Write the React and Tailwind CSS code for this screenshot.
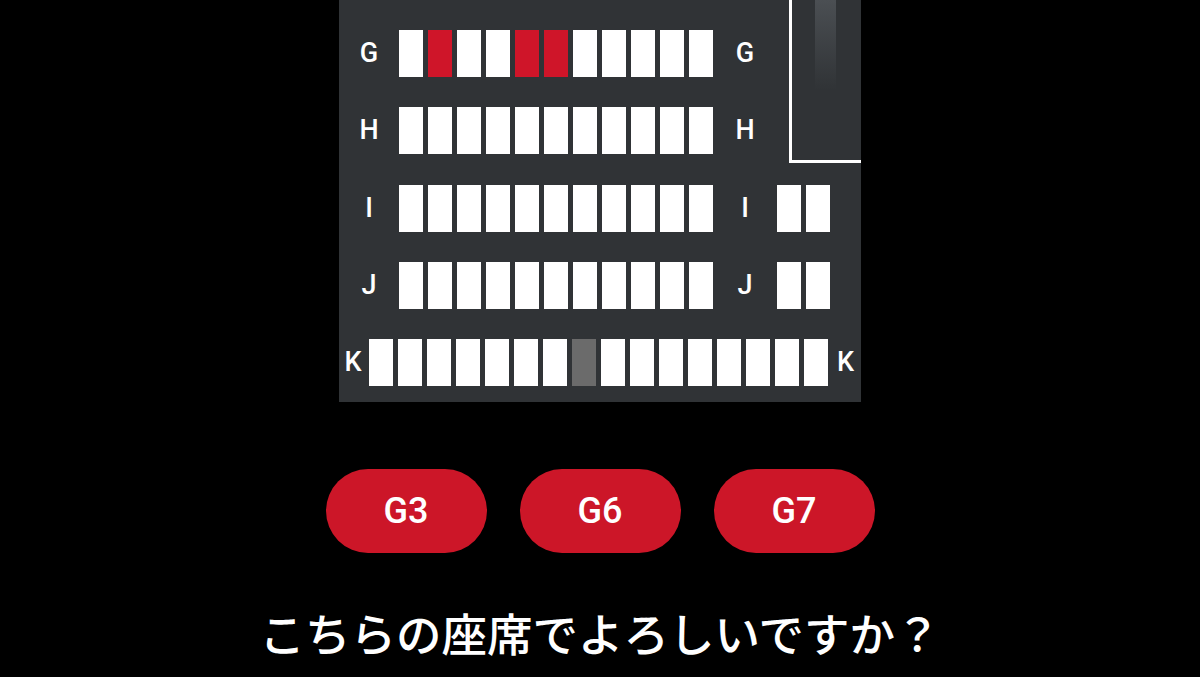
import React from 'react';

const RED = [1, 4, 5];

function Seat({ kind = 'free' }) {
    const color =
        kind === 'picked' ? 'bg-[#cf1529]' : kind === 'taken' ? 'bg-[#6b6b6b]' : 'bg-white';
    return <div className={`w-[24px] h-[47px] ${color}`} />;
}

function Label({ children, className }) {
    return (
        <div className={`text-white text-[27px] font-medium text-center leading-none ${className}`}>
            {children}
        </div>
    );
}

function Row({ letter, picked = [], side = false }) {
    return (
        <div className="flex items-center h-[47px]">
            <Label className="w-[60px]">{letter}</Label>
            <div className="flex gap-[5px]">
                {Array.from({ length: 11 }).map((_, i) => (
                    <Seat key={i} kind={picked.includes(i) ? 'picked' : 'free'} />
                ))}
            </div>
            <Label className="w-[64px]">{letter}</Label>
            {side && (
                <div className="flex gap-[5px]">
                    <Seat />
                    <Seat />
                </div>
            )}
        </div>
    );
}

export default function App() {
    return (
        <div
            className="w-full h-[677px] bg-black flex flex-col items-center overflow-hidden"
            style={{ fontFamily: 'Roboto, "Noto Sans CJK JP", sans-serif' }}
        >
            <div className="relative w-[522px] bg-[#303336] pt-[30px] pb-[16px] flex flex-col gap-[30.3px]">
                {/* screen / exit box at top right */}
                <div className="absolute left-[450px] top-0 w-[72px] h-[163px] border-l-[3px] border-b-[3px] border-white">
                    <div className="ml-[23px] w-[21px] h-[90px] bg-linear-to-b from-[#4b4f53] to-[#303336]" />
                </div>

                <Row letter="G" picked={RED} />
                <Row letter="H" />
                <Row letter="I" side />
                <Row letter="J" side />

                <div className="flex items-center h-[47px]">
                    <Label className="w-[31px] pr-[2px]">K</Label>
                    <div className="flex gap-[5px]">
                        {Array.from({ length: 16 }).map((_, i) => (
                            <Seat key={i} kind={i === 7 ? 'taken' : 'free'} />
                        ))}
                    </div>
                    <Label className="w-[34px] pl-[2px]">K</Label>
                </div>
            </div>

            <div className="flex gap-[33px] mt-[67px]">
                {['G3', 'G6', 'G7'].map((s) => (
                    <div
                        key={s}
                        className="w-[161px] h-[84px] rounded-full bg-[#cc1628] flex items-center justify-center text-white text-[36px] font-medium"
                    >
                        {s}
                    </div>
                ))}
            </div>

            <div
                className="mt-[51px] text-white text-[45.5px] font-medium leading-[56px]"
                style={{ fontFamily: '"Noto Sans CJK JP", sans-serif' }}
            >
                こちらの座席でよろしいですか？
            </div>
        </div>
    );
}
